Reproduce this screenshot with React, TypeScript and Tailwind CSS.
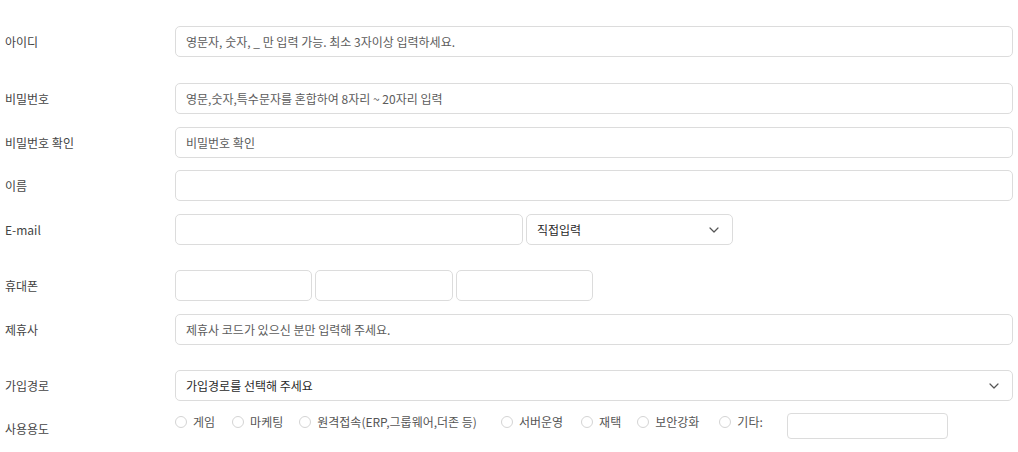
import React from "react";

const font = { fontFamily: '"Noto Sans CJK KR", "Noto Sans", sans-serif' };

function Chevron() {
  return (
    <svg width="10" height="6" viewBox="0 0 10 6" fill="none">
      <path d="M1 1l4 4 4-4" stroke="#555" strokeWidth="1.2" strokeLinecap="round" strokeLinejoin="round" />
    </svg>
  );
}

function Field({ placeholder, className = "" }: { placeholder?: string; className?: string }) {
  return (
    <div
      className={`h-[31px] border border-[#dcdcdc] rounded-[5px] bg-white flex items-center px-[10px] text-[12px] leading-[16px] text-[#5c5c5c] ${className}`}
    >
      {placeholder}
    </div>
  );
}

function Select({ text, className = "" }: { text: string; className?: string }) {
  return (
    <div
      className={`h-[31px] border border-[#dcdcdc] rounded-[5px] bg-white flex items-center justify-between pl-[10px] pr-[13px] text-[12px] leading-[16px] text-[#2a2a2a] ${className}`}
    >
      <span>{text}</span>
      <Chevron />
    </div>
  );
}

function Row({ label, children, className = "" }: { label: string; children: React.ReactNode; className?: string }) {
  return (
    <div className={`flex items-center h-[31px] ${className}`}>
      <div className="w-[175px] shrink-0 pl-[5px] text-[12px] leading-[16px] text-[#444]">{label}</div>
      {children}
    </div>
  );
}

const uses = [
  { t: "게임", m: "mr-[17px]" },
  { t: "마케팅", m: "mr-[16px]" },
  { t: "원격접속(ERP,그룹웨어,더존 등)", m: "mr-[24px]" },
  { t: "서버운영", m: "mr-[18px]" },
  { t: "재택", m: "mr-[16px]" },
  { t: "보안강화", m: "mr-[20px]" },
  { t: "기타:", m: "mr-[24px]" },
];

export default function App() {
  return (
    <div className="w-[1018px] h-[452px] bg-white pt-[26px] pr-[5px]" style={font}>
      <Row label="아이디">
        <Field className="flex-1" placeholder="영문자, 숫자, _ 만 입력 가능. 최소 3자이상 입력하세요." />
      </Row>
      <Row label="비밀번호" className="mt-[26px]">
        <Field className="flex-1" placeholder="영문,숫자,특수문자를 혼합하여 8자리 ~ 20자리 입력" />
      </Row>
      <Row label="비밀번호 확인" className="mt-[13px]">
        <Field className="flex-1" placeholder="비밀번호 확인" />
      </Row>
      <Row label="이름" className="mt-[12px]">
        <Field className="flex-1" />
      </Row>
      <Row label="E-mail" className="mt-[13px]">
        <div className="flex gap-[3px]">
          <Field className="w-[348px]" />
          <Select className="w-[207px]" text="직접입력" />
        </div>
      </Row>
      <Row label="휴대폰" className="mt-[25px]">
        <div className="flex gap-[3px]">
          <Field className="w-[137px]" />
          <Field className="w-[138px]" />
          <Field className="w-[137px]" />
        </div>
      </Row>
      <Row label="제휴사" className="mt-[13px]">
        <Field className="flex-1" placeholder="제휴사 코드가 있으신 분만 입력해 주세요." />
      </Row>
      <Row label="가입경로" className="mt-[25px]">
        <Select className="flex-1" text="가입경로를 선택해 주세요" />
      </Row>
      <div className="flex items-start mt-[12px]">
        <div className="w-[175px] shrink-0 pl-[5px] text-[12px] leading-[16px] text-[#444] pt-[8px]">사용용도</div>
        <div className="flex items-start shrink-0">
          {uses.map((u) => (
            <div key={u.t} className={`flex items-center shrink-0 h-[18px] ${u.m}`}>
              <span className="w-[12px] h-[12px] shrink-0 rounded-full border border-[#d4d4d4] bg-white mr-[6px]" />
              <span className="text-[12px] leading-[16px] text-[#555] whitespace-nowrap">{u.t}</span>
            </div>
          ))}
          <div className="w-[161px] h-[26px] shrink-0 border border-[#dcdcdc] rounded-[4px] bg-white" />
        </div>
      </div>
    </div>
  );
}
